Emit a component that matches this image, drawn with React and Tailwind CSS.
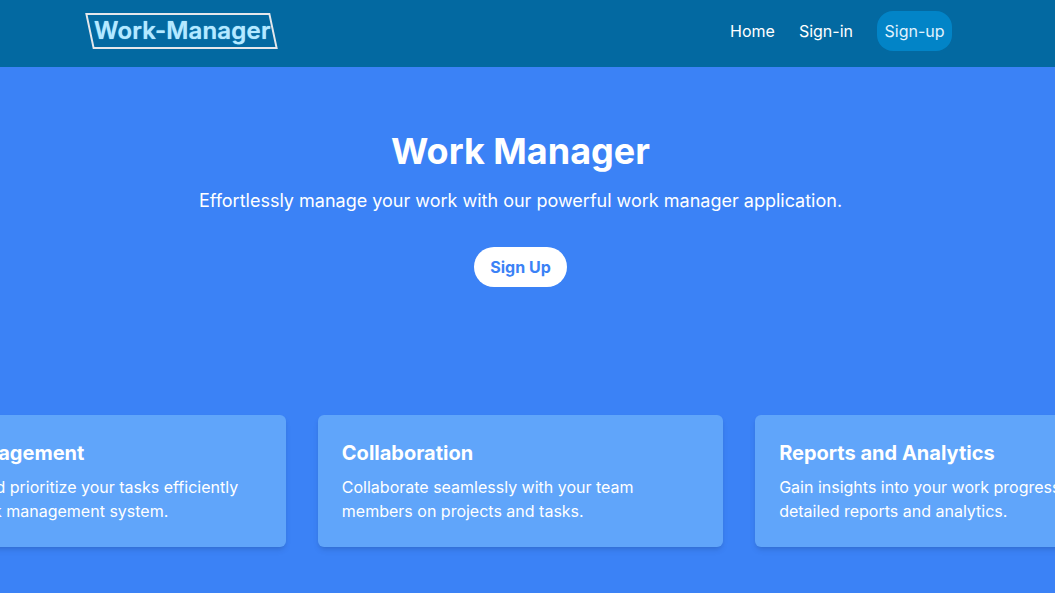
const features = [
  {
    title: 'Task Management',
    text: 'Organize and prioritize your tasks efficiently with our task management system.',
  },
  {
    title: 'Collaboration',
    text: 'Collaborate seamlessly with your team members on projects and tasks.',
  },
  {
    title: 'Reports and Analytics',
    text: 'Gain insights into your work progress with detailed reports and analytics.',
  },
];

const App = () => {
  return (
    <div className="h-[593px] overflow-hidden bg-[#3b82f6] font-['Inter',sans-serif] text-white">
      <div className="w-[1041px]">
        {/* Navbar */}
        <nav className="h-[67px] w-[1055px] bg-[#0369a1]">
          <div className="flex h-full w-[1041px] items-center justify-between pb-[5px] pl-[89px] pr-[89px]">
            <a className="w-[185px] skew-x-12 border-2 border-[#e5e7eb] pl-[2.5px]">
              <span className="block -skew-x-12 text-2xl leading-8 font-semibold tracking-[0.18px] whitespace-nowrap text-[#b5e9ff] [text-shadow:0_0_1px_#7dd3fc]">Work-Manager</span>
            </a>
            <div className="flex items-center gap-6">
              <a>Home</a>
              <a>Sign-in</a>
              <a className="w-[75px] rounded-2xl bg-[#0284c7] py-2 text-center text-[#e0f2fe]">Sign-up</a>
            </div>
          </div>
        </nav>

        {/* Hero */}
        <section className="flex flex-col items-center pt-16">
          <h1 className="text-4xl font-bold">Work Manager</h1>
          <p className="mt-4 text-lg">Effortlessly manage your work with our powerful work manager application.</p>
          <button className="mt-8 rounded-full bg-white px-4 py-2 font-bold text-[#3b82f6]">Sign Up</button>
        </section>

        {/* Features */}
        <section className="mt-32 flex justify-center">
          <div className="grid w-[1280px] shrink-0 grid-cols-3 gap-8">
            {features.map((item) => (
              <div key={item.title} className="rounded-md bg-[#60a5fa] p-6 shadow-md">
                <h3 className="mb-2 text-xl font-bold">{item.title}</h3>
                <p>{item.text}</p>
              </div>
            ))}
          </div>
        </section>
      </div>
    </div>
  );
};

export default App;
